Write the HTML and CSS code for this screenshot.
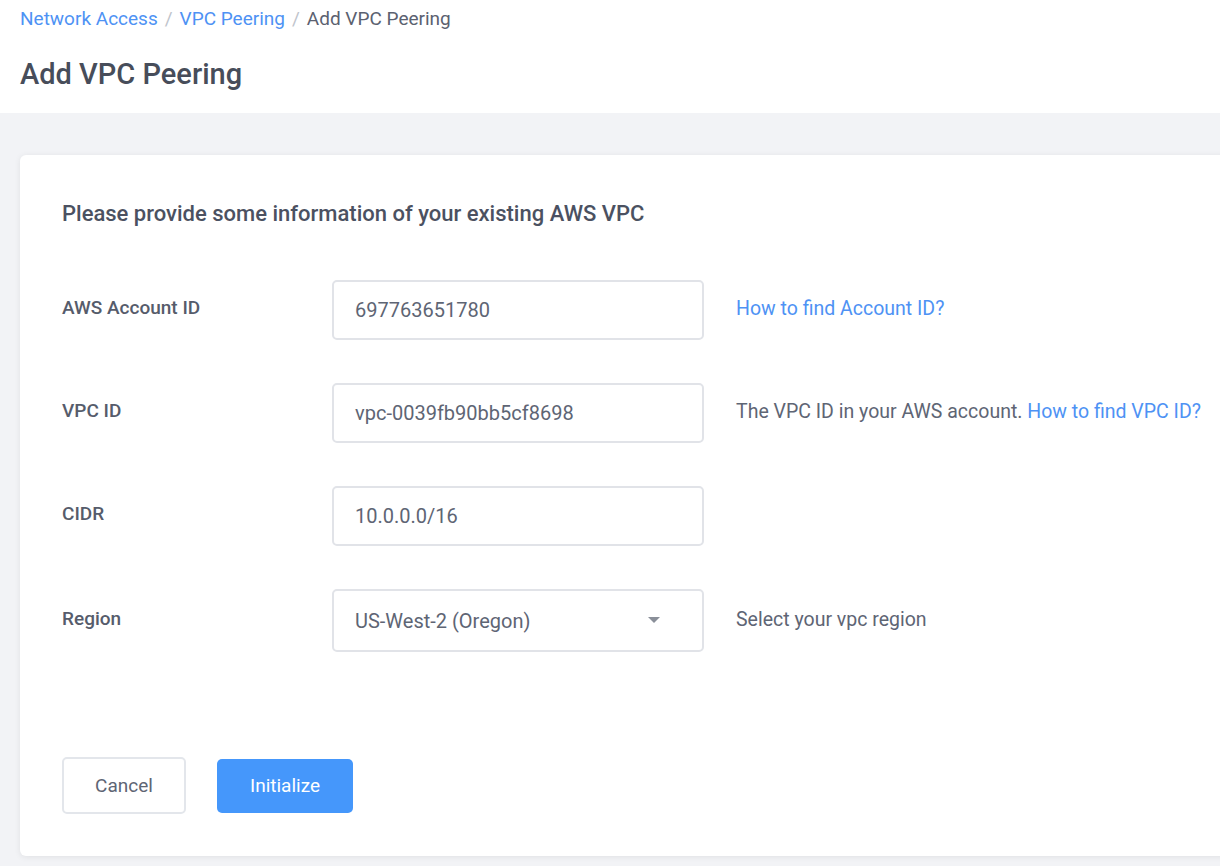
FILE: index.html
```html
<!DOCTYPE html>
<html>
<head>
<meta charset="utf-8">
<link rel="stylesheet" href="styles.css">
</head>
<body>
<header class="page-head">
  <nav class="crumbs">
    <a class="crumb-link" href="#">Network Access</a>
    <span class="sep">/</span>
    <a class="crumb-link" href="#">VPC Peering</a>
    <span class="sep">/</span>
    <span class="crumb-current">Add VPC Peering</span>
  </nav>
  <h1 class="title">Add VPC Peering</h1>
</header>
<main class="content">
  <section class="card">
    <h2 class="card-title">Please provide some information of your existing AWS VPC</h2>
    <div class="form">
      <div class="row">
        <label class="label">AWS Account ID</label>
        <div class="input">697763651780</div>
        <div class="hint"><a class="link" href="#">How to find Account ID?</a></div>
      </div>
      <div class="row">
        <label class="label">VPC ID</label>
        <div class="input">vpc-0039fb90bb5cf8698</div>
        <div class="hint">The VPC ID in your AWS account. <a class="link" href="#">How to find VPC ID?</a></div>
      </div>
      <div class="row">
        <label class="label">CIDR</label>
        <div class="input">10.0.0.0/16</div>
        <div class="hint"></div>
      </div>
      <div class="row">
        <label class="label">Region</label>
        <div class="input select">
          <span>US-West-2 (Oregon)</span>
          <svg class="caret" width="12" height="7" viewBox="0 0 12 7"><path d="M0 0 L12 0 L6 6 Z" fill="#8a8f99"/></svg>
        </div>
        <div class="hint">Select your vpc region</div>
      </div>
    </div>
    <div class="actions">
      <button class="btn btn-default">Cancel</button>
      <button class="btn btn-primary">Initialize</button>
    </div>
  </section>
</main>
</body>
</html>
```
FILE: styles.css
```css
html, body {
  margin: 0;
  padding: 0;
}
body {
  font-family: Roboto, "Open Sans", sans-serif;
  background: #f2f3f6;
  color: #5b6170;
  overflow: hidden;
  height: 866px;
}
.page-head {
  background: #fff;
  padding: 6px 20px 0;
  height: 107px;
}
.crumbs {
  font-size: 19px;
  line-height: 26px;
  display: flex;
  gap: 7px;
}
.crumb-link {
  color: #4e92f4;
  text-decoration: none;
}
.sep {
  color: #c0c4cc;
}
.crumb-current {
  color: #5b6170;
}
.title {
  margin: 22px 0 0;
  font-size: 29px;
  line-height: 40px;
  font-weight: 500;
  color: #474d5a;
}
.content {
  padding: 42px 0 0 20px;
}
.card {
  background: #fff;
  border-radius: 6px 0 0 6px;
  box-shadow: 0 1px 6px rgba(0, 0, 0, 0.08);
  margin-right: -30px;
  height: 701px;
  padding: 45px 42px 0;
  box-sizing: border-box;
}
.card-title {
  margin: 0;
  font-size: 22px;
  line-height: 28px;
  font-weight: 500;
  color: #4b5161;
}
.form {
  margin-top: 52px;
  display: flex;
  flex-direction: column;
  gap: 43px;
}
.row {
  display: grid;
  grid-template-columns: 270px 372px 1fr;
  align-items: center;
}
.label {
  font-size: 19px;
  font-weight: 500;
  color: #565c6b;
  padding-bottom: 5px;
}
.input {
  box-sizing: border-box;
  height: 60px;
  border: 2px solid #e1e3e8;
  border-radius: 5px;
  padding: 0 21px;
  display: flex;
  align-items: center;
  font-size: 20px;
  color: #5e6574;
}
.select {
  height: 63px;
  justify-content: space-between;
  padding-right: 42px;
}
.hint {
  padding-left: 32px;
  padding-bottom: 3px;
  font-size: 19.5px;
  color: #5e6574;
  white-space: nowrap;
}
.link {
  color: #4e92f4;
  text-decoration: none;
}
.actions {
  margin-top: 105px;
  display: flex;
  align-items: center;
  gap: 31px;
}
.btn {
  font-family: inherit;
  font-size: 19px;
  border-radius: 5px;
  cursor: pointer;
}
.btn-default {
  width: 124px;
  height: 57px;
  background: #fff;
  border: 2px solid #e3e6eb;
  color: #5e6574;
}
.btn-primary {
  width: 136px;
  height: 54px;
  background: #4597fb;
  border: none;
  color: #fff;
}
```
